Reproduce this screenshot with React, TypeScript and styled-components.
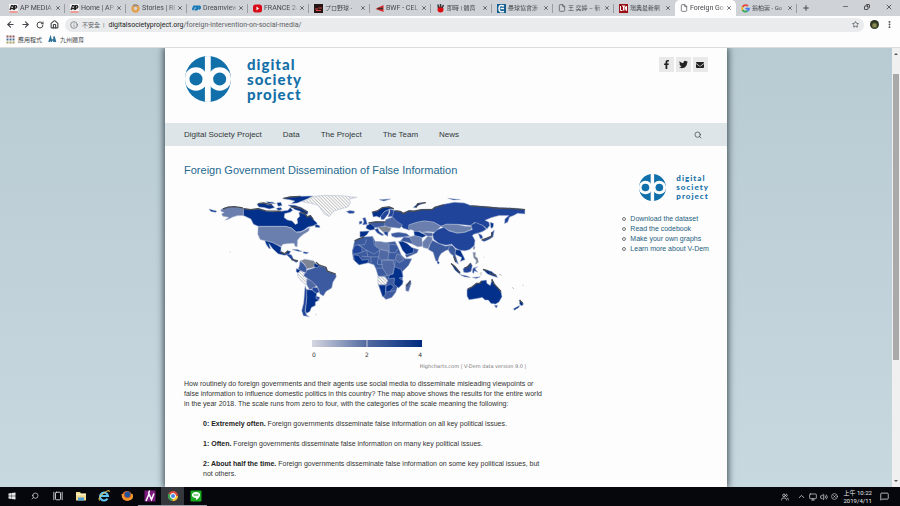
import React from "react";
import styled, { createGlobalStyle } from "styled-components";
import {
  ArrowLeft, ArrowRight, RotateCw, House, Info, Star, EllipsisVertical, X, Plus, Minus, Copy,
  Search, File as FileIcon, ChevronUp, Monitor, Volume2, MessageSquare, Users, GalleryHorizontal, CircleX,
} from "lucide-react";
import { FaFacebookF, FaTwitter, FaEnvelope, FaWindows } from "react-icons/fa";

const Global = createGlobalStyle`
  *, *::before, *::after { box-sizing: border-box; }
  body { margin: 0; font-family: "Liberation Sans", "Noto Sans CJK TC", sans-serif; }
  button { border: 0; padding: 0; background: none; font: inherit; color: inherit; }
  a { color: inherit; text-decoration: none; }
  svg { display: block; flex: none; }
`;

const Screen = styled.div`
  height: 100vh;
  display: flex;
  flex-direction: column;
  overflow: hidden;
`;

/* ---------- browser ---------- */
const chromeFont = `Roboto, "Noto Sans CJK TC", "Noto Sans CJK JP", sans-serif`;

const TabStrip = styled.div`
  display: flex;
  height: 16px;
  padding-left: 4px;
  background: #cfd3d8;
  font-family: ${chromeFont};
  font-size: 7px;
  color: #45494e;
`;
const Tab = styled.div<{ $active?: boolean; $plain?: boolean }>`
  display: flex;
  align-items: center;
  gap: 2px;
  width: 61px;
  min-width: 0;
  padding: 0 4px 0 5px;
  background: ${(p) => (p.$active ? "#fdfdfd" : "transparent")};
  border-radius: ${(p) => (p.$active ? "5px 5px 0 0" : "0")};
  position: relative;
  &::after {
    content: "";
    display: ${(p) => (p.$plain || p.$active ? "none" : "block")};
    position: absolute;
    right: 0;
    top: 4px;
    height: 9px;
    width: 1px;
    background: #9a9da1;
  }
`;
const TabTitle = styled.button<{ $cjk?: boolean }>`
  flex: 1;
  min-width: 0;
  overflow: hidden;
  white-space: nowrap;
  text-align: left;
  font-size: ${(p) => (p.$cjk ? "6px" : "7px")};
  line-height: 12px;
  mask-image: linear-gradient(90deg, #000 80%, #0004);
`;
const IconButton = styled.button`
  display: grid;
  place-items: center;
`;
const NewTab = styled(IconButton)`
  width: 17px;
`;
const WindowButtons = styled.div`
  display: flex;
  margin-left: auto;
`;
const WindowButton = styled(IconButton)`
  width: 22px;
  height: 13px;
  color: #222;
`;
const Toolbar = styled.div`
  display: flex;
  align-items: center;
  height: 17px;
  padding: 0 6px;
  gap: 6px;
  background: #fdfdfd;
  color: #44474b;
`;
const Address = styled.div`
  flex: 1;
  display: flex;
  align-items: center;
  gap: 4px;
  height: 14px;
  padding: 0 5px;
  border-radius: 7px;
  background: #e9ebed;
  font-family: ${chromeFont};
  font-size: 7px;
  color: #5d6165;
`;
const Unsafe = styled.span`
  font-size: 6px;
  white-space: nowrap;
`;
const UrlInput = styled.div`
  flex: 1;
  line-height: 14px;
  white-space: nowrap;
  b { font-weight: 400; color: #222; }
`;
const Avatar = styled.button`
  width: 9px;
  height: 9px;
  border-radius: 50%;
  background: radial-gradient(circle at 50% 60%, #8b8a55 0 20%, #2e3a20 45%, #262020);
`;
const Bookmarks = styled.div`
  display: flex;
  align-items: center;
  gap: 6px;
  height: 15px;
  padding: 0 6px 1px;
  border-bottom: 1px solid #dcdddf;
  background: #fdfdfd;
  font-family: ${chromeFont};
  font-size: 6px;
  color: #44474b;
  a { display: flex; align-items: center; gap: 3px; }
`;

/* ---------- page ---------- */
const Viewport = styled.div`
  flex: 1;
  min-height: 0;
  display: flex;
  overflow: hidden;
`;
const Backdrop = styled.div`
  flex: 1;
  overflow: hidden;
  background: linear-gradient(180deg, #b9cbd2, #c0d1d9 50%, #c8d8df);
`;
const Sheet = styled.div`
  width: 63%;
  min-height: 100%;
  margin: 0 auto;
  background: #fdfdfd;
  box-shadow: 0 0 7px 1px #36454d;
`;
const Header = styled.header`
  display: flex;
  justify-content: space-between;
  align-items: flex-start;
  height: 75px;
  padding: 8px 19px 0 20px;
`;
const Brand = styled.a<{ $small?: boolean }>`
  display: flex;
  align-items: center;
  gap: ${(p) => (p.$small ? "10px" : "16px")};
  font-family: Lato, sans-serif;
  font-weight: 900;
  font-size: ${(p) => (p.$small ? "8px" : "15px")};
  line-height: ${(p) => (p.$small ? "9px" : "15px")};
  letter-spacing: 1px;
  color: #1470a8;
  span { display: block; }
`;
const Social = styled.div`
  display: flex;
  gap: 2px;
`;
const SocialLink = styled.a`
  display: grid;
  place-items: center;
  width: 15px;
  height: 15px;
  margin-top: 1px;
  background: #e9e9e9;
  color: #222;
`;
const Nav = styled.nav`
  display: flex;
  align-items: center;
  gap: 21px;
  height: 23px;
  padding: 0 25px 0 19px;
  background: #dde5e8;
  font-size: 8px;
  color: #33383b;
  button { margin-left: auto; }
`;
const Columns = styled.div`
  display: flex;
  justify-content: space-between;
  align-items: flex-start;
  padding: 0 18px 0 19px;
`;
const Article = styled.main`
  width: 69%;
  padding-top: 17px;
  font-size: 7px;
  line-height: 10px;
  color: #333;
`;
const Title = styled.h1`
  margin: 0;
  font-size: 11px;
  line-height: 15px;
  font-weight: 400;
  color: #256a90;
`;
const Figure = styled.figure`
  margin: 8px 0 9px;
  font-family: "DejaVu Sans", sans-serif;
  font-size: 6px;
`;
const Legend = styled.div`
  width: 110px;
  margin: 9px 0 0 128px;
`;
const Ramp = styled.div`
  height: 7px;
  background: linear-gradient(90deg, transparent calc(50% - 1px), #c5cad8 50%, transparent calc(50% + 1px)),
    linear-gradient(90deg, #d5d7e0, #5269a0 50%, #002a80);
`;
const Scale = styled.div`
  display: flex;
  justify-content: space-between;
  line-height: 8px;
  margin-top: 4px;
`;
const Credits = styled.figcaption`
  margin: 3px 20px 0 0;
  line-height: 8px;
  font-size: 5px;
  text-align: right;
  color: #777;
`;
const Para = styled.p`
  margin: 0;
`;
const Quote = styled.p`
  margin: 10px 0 0 19px;
  b { color: #222; }
`;
const Aside = styled.aside`
  display: flex;
  flex-direction: column;
  align-items: flex-end;
  gap: 13px;
  padding-top: 28px;
  font-size: 7px;
  line-height: 10px;
  color: #256080;
`;
const LinkList = styled.ul`
  margin: 0;
  padding: 0;
  list-style: none;
  li { display: flex; align-items: center; gap: 4px; }
  li::before {
    content: "";
    width: 4px;
    height: 4px;
    border: 1px solid #777;
    border-radius: 50%;
  }
`;
const Scrollbar = styled.div`
  display: flex;
  flex-direction: column;
  width: 8px;
  padding: 3px 1px;
  align-items: center;
  background: #f0f0f0;
`;
const Thumb = styled.div`
  width: 6px;
  height: 66%;
  margin-top: 19px;
  background: #a9a9a9;
`;
const Caret = styled.i<{ $down?: boolean }>`
  border: 2px solid transparent;
  border-bottom-color: ${(p) => (p.$down ? "transparent" : "#555")};
  border-top-color: ${(p) => (p.$down ? "#555" : "transparent")};
  margin-top: ${(p) => (p.$down ? "auto" : "0")};
`;

/* ---------- taskbar ---------- */
const Taskbar = styled.footer`
  display: flex;
  align-items: center;
  height: 19px;
  background: #05070d;
  color: #e6e8ea;
`;
const TaskButton = styled.button<{ $running?: boolean; $active?: boolean }>`
  display: grid;
  place-items: center;
  width: 23px;
  height: 19px;
  background: ${(p) => (p.$active ? "#34373b" : "transparent")};
  border-bottom: 1px solid ${(p) => (p.$running ? "#9a9da3" : "transparent")};
`;
const Tray = styled.div`
  display: flex;
  align-items: center;
  gap: 3px;
  margin-left: auto;
  padding-right: 11px;
  > button:first-child { margin-right: 5px; }
`;
const Clock = styled.time`
  margin: 0 5px 0 2px;
  text-align: center;
  font-family: ${chromeFont};
  font-size: 6px;
  line-height: 8px;
  white-space: nowrap;
`;

/* ---------- drawings ---------- */
const LogoMark = ({ size }: { size: number }) => (
  <svg width={size} height={size} viewBox="0 0 134 134" aria-hidden="true">
    <defs>
      <clipPath id="disc"><circle cx="67" cy="67" r="67" /></clipPath>
    </defs>
    <g clipPath="url(#disc)">
      <rect width="134" height="134" fill="#1170aa" />
      <rect x="58" width="17" height="134" fill="#fdfdfd" />
      <circle cx="32" cy="67" r="34" fill="#fdfdfd" />
      <circle cx="101" cy="67" r="34" fill="#fdfdfd" />
    </g>
    <circle cx="32" cy="67" r="19" fill="#1170aa" />
    <circle cx="101" cy="67" r="19" fill="#1170aa" />
  </svg>
);

type Shape = [string, string];
const C = { a: "#03308a", b: "#1f449a", c: "#3b5a9f", d: "#5069a4", e: "#6b7fae", g: "#7d8492", h: "url(#hatch)" };

const west: Shape[] = [
  [C.e, "M60 86L74 80 100 77 128 82V104L110 104 96 108 84 114 72 118 84 109 66 106 62 99 70 95 60 91Z"],
  [C.a, "M24 84L34 87 47 90 45 94 30 92Z"],
  [C.a, "M128 83L150 86 172 83 195 90 215 92 240 91 262 88 268 80 276 88 268 94 252 98 250 110 260 117 274 120 284 131 291 127 289 114 297 106 294 95 310 95 320 108 329 103 338 116 347 124 350 130 336 135 322 138 310 147 300 152 286 153 273 141 255 136 172 136 158 130 150 114 128 104Z"],
  [C.a, "M168 69L188 66 200 71 214 72 222 80 206 84 190 80 174 78Z"],
  [C.a, "M196 62L216 64 224 68 204 68ZM228 66L240 64 244 74 232 76ZM226 82L240 80 244 86 232 88Z"],
  [C.a, "M262 72L282 73 300 79 314 87 322 92 320 101 306 98 296 90 282 86 274 80Z"],
  [C.a, "M245 53L268 48 300 46 336 45 320 54 304 60 290 66 272 68 282 60 266 56Z"],
  [C.a, "M343 130L356 134 358 140 344 139Z"],
  [C.h, "M304 62L320 54 340 46 375 43 420 44 468 49 444 55 450 64 442 78 420 84 400 90 392 100 385 107 370 99 360 84 352 73 330 67Z"],
  [C.b, "M437 92L448 89 462 91 460 97 446 98Z"],
  [C.e, "M172 137L255 137 273 142 286 154 300 154 312 148 326 140 324 150 308 160 298 168 290 178 290 184 289 198 283 196 280 187 262 188 246 190 242 197 228 191 214 184 194 180 178 176 171 160Z"],
  [C.a, "M192 179L214 185 228 192 241 199 240 213 252 219 260 210 270 211 264 222 250 223 232 219 216 204 204 188 209 204 204 202 196 190Z"],
  [C.b, "M254 219L264 220 272 222 279 236 292 242 286 245 272 236 262 226Z"],
  [C.a, "M274 206L290 206 304 212 292 211ZM308 213L324 215 318 219 308 217Z"],
  [C.c, "M352 254L376 260 380 271 405 280 407 288 397 304 393 322 376 332 368 346 358 340 350 318 332 302 316 290 308 284 318 268 338 262Z"],
  [C.g, "M300 240L312 235 338 240 346 248 338 260 318 264 312 250Z"],
  [C.c, "M298 240L310 250 318 262 316 276 304 272 292 266 296 254Z"],
  [C.a, "M340 247L356 253 350 261 340 258ZM287 263L299 268 292 277 286 272Z"],
  [C.h, "M292 276L302 270 310 280 308 290 318 298 316 312 302 301 290 286Z"],
  [C.d, "M318 294L332 300 346 314 340 324 326 326 318 312Z"],
  [C.b, "M336 320L350 320 356 334 346 338 334 328Z"],
  [C.a, "M316 326L334 328 348 339 346 352 356 358 344 364 344 374 332 380 328 392 318 398 314 392 318 350Z"],
  [C.b, "M313 316L318 328 318 352 313 392 318 404 326 408 308 405 303 390 309 366Z"],
  [C.b, "M346 346L358 350 354 357 346 353Z"],
];

const east: Shape[] = [
  [C.b, "M130 88L150 90 158 96 176 88 190 90 214 85 246 84 252 78 280 70 312 64 342 66 362 74 400 76 444 80 484 81 524 85V99L502 97 490 104 478 108 472 124 463 128 464 114 476 104 446 104 424 110 404 118 416 124 418 134 410 144 398 134 372 125 362 134 320 130 288 130 272 136 250 124 222 120 200 124 176 132 178 148 158 142 144 128 130 116 122 104Z"],
  [C.a, "M188 80L202 68 226 65 206 72 196 80ZM86 56L120 54 100 60ZM292 52L330 56 310 57Z"],
  [C.e, "M175 132L200 124 222 120 250 124 272 136 262 145 256 154 232 152 214 154 204 150 198 158 188 148 174 144Z"],
  [C.e, "M272 136L288 130 320 131 344 136 366 137 362 146 342 154 320 156 296 149Z"],
  [C.b, "M246 160L262 146 280 139 296 150 320 157 342 155 366 146 362 132 376 125 398 134 408 145 397 152 384 156 370 160 366 164 374 178 372 194 358 206 344 210 328 208 316 202 304 190 286 193 266 188 250 176Z"],
  [C.c, "M238 192L246 178 260 186 286 196 302 192 296 206 286 209 272 218 266 228 262 243 256 240 248 214 234 206Z"],
  [C.e, "M216 184L232 166 246 170 244 182 236 194 234 204 218 200Z"],
  [C.e, "M176 168L194 164 214 170 216 196 202 198 186 190Z"],
  [C.a, "M190 152L204 152 228 164 216 170 202 166 192 164Z"],
  [C.d, "M214 154L246 156 246 166 232 166Z"],
  [C.c, "M122 158L144 154 168 158 178 166 160 168 136 170 124 166Z"],
  [C.c, "M160 168L178 170 188 190 170 184 150 180Z"],
  [C.a, "M144 182L156 181 170 188 184 200 194 204 190 216 168 222 156 208Z"],
  [C.c, "M190 202L204 206 200 216 168 230 164 222 188 216Z"],
  [C.a, "M64 94L80 90 96 80 116 78 130 84 118 84 102 92 88 110 78 106 68 108Z"],
  [C.b, "M90 106L102 92 116 86 114 98 100 116 92 116ZM118 84L130 88 126 106 112 108 118 94Z"],
  [C.d, "M106 116L126 108 140 122 156 132 148 142 128 140 108 138 98 130Z"],
  [C.c, "M54 126L76 122 100 122 104 134 88 140 62 140Z"],
  [C.g, "M82 138L106 136 122 142 118 150 106 160 92 148Z"],
  [C.a, "M48 134L60 128 72 138 72 146 58 148 46 142Z"],
  [C.a, "M28 152L56 150 50 160 40 168 28 168Z"],
  [C.b, "M72 146L82 142 86 152 100 162 94 164 80 156ZM100 152L112 152 112 166 102 160Z"],
  [C.b, "M36 112L44 110 48 122 50 130 36 132 40 122ZM26 122L34 120 34 128 26 130Z"],
  [C.c, "M12 180L24 174 40 168 66 166 74 182 100 186 134 182 144 202 152 222 164 234 184 234 174 254 156 272 156 298 142 314 136 334 124 350 106 356 96 346 84 312 84 290 76 264 70 252 52 246 24 252 8 236 5 212Z"],
  [C.e, "M74 182L90 182 108 186 116 190 116 212 90 206 76 198Z"],
  [C.b, "M22 192L34 200 34 214 18 218 6 220 6 208 12 194Z"],
  [C.a, "M8 222L24 224 34 238 54 236 52 246 26 252 12 240Z"],
  [C.d, "M88 206L116 212 112 236 92 238 84 228ZM140 218L152 224 160 238 146 246 134 236Z"],
  [C.d, "M92 240L128 238 132 258 126 280 110 284 96 262Z"],
  [C.a, "M132 258L152 266 158 288 146 292 158 300 156 310 144 322 130 310 132 292 112 294 118 282 128 280Z"],
  [C.h, "M82 286L104 288 112 300 106 312 82 312Z"],
  [C.a, "M84 313L106 313 104 344 96 348ZM106 316L120 310 130 318 118 332 106 334Z"],
  [C.d, "M180 298L182 308 174 332 166 330 166 312Z"],
  [C.c, "M296 196L306 194 316 206 314 220 324 250 316 244 308 224 300 218 294 208Z"],
  [C.a, "M316 206L330 208 344 236 330 242 334 230 322 224 314 220Z"],
  [C.a, "M302 248L314 256 330 274 328 280 314 268ZM328 281L350 286 360 290 342 288Z"],
  [C.b, "M338 264L350 258 360 246 366 254 362 272 350 276 340 274Z"],
  [C.b, "M368 262L382 258 374 264 382 274 372 270 370 278 366 274ZM366 290L390 288 378 293Z"],
  [C.a, "M398 266L410 268 424 272 438 284 442 290 428 286 412 280Z"],
  [C.g, "M368 214L376 216 374 226 382 232 384 244 376 250 378 240 370 230ZM370 196L374 198 372 206 368 204Z"],
  [C.b, "M384 158L394 162 398 172 390 174ZM394 178L410 172 424 166 424 154 432 148 428 168 416 176 402 182Z"],
  [C.a, "M420 124L430 128 428 140 422 142ZM262 240L267 246 264 250 260 246Z"],
  [C.a, "M350 326L366 318 378 308 388 308 394 300 408 298 410 308 420 314 426 294 432 310 440 318 452 332 455 348 446 364 436 370 422 368 414 358 404 358 396 350 376 354 356 357 350 346Z"],
  [C.a, "M432 374L442 374 438 382ZM508 358L520 370 514 376 508 370ZM508 374L506 380 492 389 490 384Z"],
];

const coasts = [
  "M128 83L150 86 172 83 195 90 240 91M66 84L80 79 100 77 126 81M172 68L188 66 214 72M248 52L268 48 300 46",
  "M240 213L252 219 262 210M272 236L292 240M346 244L356 253 376 260 380 271 405 280",
  "M270 78L300 82 320 94M298 96L310 96 320 108 329 104 338 116",
];
const eastCoasts = [
  "M134 90L150 92 158 98 176 90 190 91 214 86 246 86 254 79 280 72M362 75L400 78 444 82 484 83 524 86M64 94L80 90 96 80 116 78 130 84M54 126L76 123 104 124M12 180L24 174 40 169",
  "M352 325L366 318 378 308 388 308 394 300M424 296L432 310 452 332M196 80L202 68 226 65M508 358L518 368M416 276L438 284",
  "M302 248L314 258 328 276M342 262L352 258 362 248M394 178L410 172 424 166 424 154M180 300L168 316M310 226L316 244M398 266L414 270",
];

const WorldMap = () => (
  <svg width="100%" viewBox="0 0 363 145" role="img" aria-label="World map of foreign government dissemination of false information">
    <defs>
      <pattern id="hatch" width="7" height="7" patternUnits="userSpaceOnUse" patternTransform="rotate(-45)">
        <rect width="7" height="7" fill="#f8f8f8" />
        <path d="M0 0V7" stroke="#a2a2a2" strokeWidth="3" />
      </pattern>
    </defs>
    <g transform="translate(17 -5) scale(.3333)" stroke="#a5b2cf" strokeWidth="1.5" strokeLinejoin="round">
      {west.map(([fill, d], i) => <path key={i} fill={fill} d={d} />)}
      {coasts.map((d) => <path key={d} d={d} fill="none" stroke="#484c54" strokeWidth="4" />)}
      <path d="M88 212v2M344 402h3" stroke="#777" />
    </g>
    <g transform="translate(167 -5) scale(.3333)" stroke="#a0aecd" strokeWidth="1.5" strokeLinejoin="round">
      {east.map(([fill, d], i) => <path key={i} fill={fill} d={d} />)}
      <path
        fill="none"
        d="M24 192L48 208 70 220 90 206M48 176L42 192 22 192M34 214L48 208 52 228 34 226M52 228L78 228 84 228 80 250 96 252M66 166L72 196M112 214L134 216 142 204M112 236L134 238M60 228L62 246M116 190L140 192M132 258L134 240M96 262L78 262M118 332L134 330M84 288L110 284"
      />
      {eastCoasts.map((d) => <path key={d} d={d} fill="none" stroke="#484c54" strokeWidth="4" />)}
      <path d="M486 320l5 4M519 312v3M446 280l8 4M402 228v2M392 274v10" stroke="#777" />
    </g>
  </svg>
);

const Favicon = ({ kind }: { kind: string }) => {
  if (kind === "file") return <FileIcon size={8} strokeWidth={2} />;
  return (
    <svg width="9" height="9" viewBox="0 0 18 18" aria-hidden="true">
      {kind === "ap" && <><rect width="18" height="14" fill="#f4f4f4" /><path d="M2 12L5 3h3l2 9M4 9h5M11 12V3h3q3 3 0 5h-3" fill="none" stroke="#222" strokeWidth="2.5" /><path d="M1 16h16" stroke="#f58b80" strokeWidth="3" /></>}
      {kind === "stories" && <><circle cx="9" cy="9" r="6" fill="none" stroke="#e5a04e" strokeWidth="5" /><path d="M4 4a7 7 0 0 1 10 0" fill="none" stroke="#8d8c91" strokeWidth="3" /></>}
      {kind === "dream" && <path d="M1 12L4 5h5q4 2 0 6H5M10 12V5h5q4 3-2 5" fill="none" stroke="#1879b9" strokeWidth="4" />}
      {kind === "france" && <><rect y="1" width="18" height="16" rx="5" fill="#d80c18" /><path d="M7 5l5 4-5 4z" fill="#fff" /></>}
      {kind === "npb" && <><rect width="18" height="18" fill="#251414" /><path d="M2 10h6M9 8h7M4 13h10" stroke="#d44" strokeWidth="2" /></>}
      {kind === "bwf" && <><path d="M1 10L17 2V16Z" fill="#d9292a" /><path d="M5 9h11" stroke="#333" strokeWidth="3" /></>}
      {kind === "hand" && <><circle cx="9" cy="11" r="6" fill="#d90d12" /><path d="M5 8L4 1M9 7V0M12 8L15 2" stroke="#333" strokeWidth="3" /></>}
      {kind === "ball" && <><rect width="18" height="18" fill="#155c8f" /><path d="M14 4Q4 0 4 9t10 6M7 9h7" fill="none" stroke="#fff" strokeWidth="3" /></>}
      {kind === "ltn" && <><rect width="18" height="18" fill="#9b1016" /><path d="M3 4v9h4M6 4h6M9 4v9M12 13V5l3 8V4" fill="none" stroke="#fff" strokeWidth="2" /></>}
      {kind === "google" && <g fill="none" strokeWidth="3.5"><path d="M14 4A7 7 0 0 0 3 6" stroke="#e34a3d" /><path d="M3 6a7 7 0 0 0 0 6" stroke="#f3b91d" /><path d="M3 12a7 7 0 0 0 10 2" stroke="#36a854" /><path d="M13 14q3-2 3-5H9" stroke="#3f7de8" /></g>}
      {kind === "apps" && <g strokeWidth="4"><path d="M1 3h4M7 3h4M13 3h4" stroke="#8a5a56" /><path d="M1 9h4M7 9h4M13 9h4" stroke="#4a6f9a" /><path d="M1 15h4M7 15h4M13 15h4" stroke="#a9a060" /></g>}
      {kind === "bet" && <path d="M2 14L5 5l2 9M6 10h6M12 14V3l3 11" fill="none" stroke="#2a6f95" strokeWidth="3" />}
    </svg>
  );
};

const tabs: [string, string, boolean?][] = [
  ["ap", "AP MEDIA"], ["ap", "Home | AP"], ["stories", "Stories | RE"], ["dream", "Dreamview"],
  ["france", "FRANCE 24"], ["npb", "プロ野球 -", true], ["bwf", "BWF - CEL"], ["hand", "即時 | 體育", true],
  ["ball", "壘球協會涉", true], ["file", "王 奕婷 – 新", true], ["ltn", "瑞典最新網", true], ["file", "Foreign Go"],
  ["google", "翁柏崇 - Go", true],
];

const Brandmark = ({ small }: { small?: boolean }) => (
  <Brand href="#" $small={small}>
    <LogoMark size={small ? 27 : 46} />
    <div><span>digital</span><span>society</span><span>project</span></div>
  </Brand>
);

const TaskIcon = ({ kind }: { kind: string }) => (
  <svg width="12" height="12" viewBox="0 0 24 24" aria-hidden="true">
    {kind === "folder" && <><path d="M2 4h8l2 3h10v14H2Z" fill="#f2d98b" /><path d="M6 21v-6h12v6" fill="#4ba0d9" /><path d="M2 9h20" stroke="#fff3c2" strokeWidth="3" /></>}
    {kind === "ie" && <><path d="M19 17a8 8 0 1 1 1-5H6" fill="none" stroke="#62c5ee" strokeWidth="4" /><path d="M3 21Q-1 15 12 6T22 4" fill="none" stroke="#f0cf55" strokeWidth="2" /></>}
    {kind === "firefox" && <><circle cx="12" cy="12" r="10" fill="#e66a22" /><circle cx="13" cy="9" r="6" fill="#24539a" /><path d="M3 8Q3 20 14 19t7-11" fill="none" stroke="#f49b2c" strokeWidth="4" /></>}
    {kind === "n" && <><rect x="1" y="1" width="22" height="22" fill="#7c1a7d" /><path d="M4 22L10 8l5 11 5-12M11 1l-2 7" fill="none" stroke="#fff" strokeWidth="3" /></>}
    {kind === "chrome" && <><circle cx="12" cy="12" r="10" fill="#e14b3b" /><path d="M12 12L3 7a10 10 0 0 0 8 15Z" fill="#36a350" /><path d="M12 12h10a10 10 0 0 1-11 10Z" fill="#f6c82d" /><circle cx="12" cy="12" r="5" fill="#4a86df" stroke="#fff" strokeWidth="2" /></>}
    {kind === "line" && <><rect x="1" y="1" width="22" height="22" rx="2" fill="#18a91e" /><path d="M12 4c12 0 10 11 0 16v-4C1 16 1 4 12 4Z" fill="#fff" /><path d="M7 10h10" stroke="#18a91e" strokeWidth="2" /></>}
  </svg>
);

export default function App() {
  return (
    <Screen>
      <Global />
      <TabStrip>
        {tabs.map(([icon, title, cjk], i) => (
          <Tab key={i} $active={i === 11} $plain={i === 10}>
            <Favicon kind={icon} />
            <TabTitle $cjk={cjk}>{title}</TabTitle>
            <IconButton aria-label="Close tab"><X size={6} strokeWidth={3} /></IconButton>
          </Tab>
        ))}
        <NewTab aria-label="New tab"><Plus size={8} strokeWidth={3} /></NewTab>
        <WindowButtons>
          <WindowButton aria-label="Minimize"><Minus size={7} /></WindowButton>
          <WindowButton aria-label="Restore"><Copy size={6} strokeWidth={3} transform="scale(-1 1)" /></WindowButton>
          <WindowButton aria-label="Close"><X size={8} /></WindowButton>
        </WindowButtons>
      </TabStrip>
      <Toolbar>
        <IconButton aria-label="Back"><ArrowLeft size={9} strokeWidth={3} /></IconButton>
        <IconButton aria-label="Forward"><ArrowRight size={9} strokeWidth={3} /></IconButton>
        <IconButton aria-label="Reload"><RotateCw size={8} strokeWidth={3} /></IconButton>
        <IconButton aria-label="Home"><House size={9} strokeWidth={3} /></IconButton>
        <Address>
          <Info size={8} />
          <Unsafe>不安全&nbsp; |</Unsafe>
          <UrlInput role="textbox" aria-label="Address"><b>digitalsocietyproject.org</b>/foreign-intervention-on-social-media/</UrlInput>
          <IconButton aria-label="Bookmark"><Star size={7} strokeWidth={3} /></IconButton>
        </Address>
        <Avatar aria-label="Profile" />
        <IconButton aria-label="Menu"><EllipsisVertical size={9} strokeWidth={3} /></IconButton>
      </Toolbar>
      <Bookmarks>
        <a href="#"><Favicon kind="apps" />應用程式</a>
        <a href="#"><Favicon kind="bet" />九州體育</a>
      </Bookmarks>

      <Viewport>
        <Backdrop>
          <Sheet>
            <Header>
              <Brandmark />
              <Social>
                <SocialLink href="#" aria-label="Facebook"><FaFacebookF size={9} /></SocialLink>
                <SocialLink href="#" aria-label="Twitter"><FaTwitter size={9} /></SocialLink>
                <SocialLink href="#" aria-label="Email"><FaEnvelope size={8} /></SocialLink>
              </Social>
            </Header>
            <Nav>
              <a href="#">Digital Society Project</a>
              <a href="#">Data</a>
              <a href="#">The Project</a>
              <a href="#">The Team</a>
              <a href="#">News</a>
              <IconButton aria-label="Search"><Search size={8} /></IconButton>
            </Nav>
            <Columns>
              <Article>
                <Title>Foreign Government Dissemination of False Information</Title>
                <Figure>
                  <WorldMap />
                  <Legend>
                    <Ramp />
                    <Scale><span>0</span><span>2</span><span>4</span></Scale>
                  </Legend>
                  <Credits>Highcharts.com | V-Dem data version 9.0 |</Credits>
                </Figure>
                <Para>
                  How routinely do foreign governments and their agents use social media to disseminate misleading viewpoints or
                  false information to influence domestic politics in this country? The map above shows the results for the entire
                  world in the year 2018. The scale runs from zero to four, with the categories of the scale meaning the following:
                </Para>
                <Quote><b>0: Extremely often.</b> Foreign governments disseminate false information on all key political issues.</Quote>
                <Quote><b>1: Often.</b> Foreign governments disseminate false information on many key political issues.</Quote>
                <Quote><b>2: About half the time.</b> Foreign governments disseminate false information on some key political issues, but not others.</Quote>
              </Article>
              <Aside>
                <Brandmark small />
                <LinkList>
                  <li><a href="#">Download the dataset</a></li>
                  <li><a href="#">Read the codebook</a></li>
                  <li><a href="#">Make your own graphs</a></li>
                  <li><a href="#">Learn more about V-Dem</a></li>
                </LinkList>
              </Aside>
            </Columns>
          </Sheet>
        </Backdrop>
        <Scrollbar><Caret /><Thumb /><Caret $down /></Scrollbar>
      </Viewport>

      <Taskbar>
        <TaskButton aria-label="Start"><FaWindows size={8} /></TaskButton>
        <TaskButton aria-label="Search"><Search size={8} transform="scale(-1 1)" /></TaskButton>
        <TaskButton aria-label="Task view"><GalleryHorizontal size={10} /></TaskButton>
        <TaskButton aria-label="File Explorer"><TaskIcon kind="folder" /></TaskButton>
        <TaskButton aria-label="Internet Explorer"><TaskIcon kind="ie" /></TaskButton>
        <TaskButton aria-label="Firefox"><TaskIcon kind="firefox" /></TaskButton>
        <TaskButton aria-label="Notes" $running><TaskIcon kind="n" /></TaskButton>
        <TaskButton aria-label="Chrome" $running $active><TaskIcon kind="chrome" /></TaskButton>
        <TaskButton aria-label="LINE" $running><TaskIcon kind="line" /></TaskButton>
        <Tray>
          <IconButton aria-label="People"><Users size={8} /></IconButton>
          <IconButton aria-label="Show hidden icons"><ChevronUp size={9} /></IconButton>
          <IconButton aria-label="Network"><Monitor size={8} /></IconButton>
          <IconButton aria-label="Volume"><Volume2 size={8} /></IconButton>
          <IconButton aria-label="Status"><CircleX size={7} /></IconButton>
          <Clock>上午 10:22<br />2019/4/11</Clock>
          <IconButton aria-label="Notifications"><MessageSquare size={9} /></IconButton>
        </Tray>
      </Taskbar>
    </Screen>
  );
}
